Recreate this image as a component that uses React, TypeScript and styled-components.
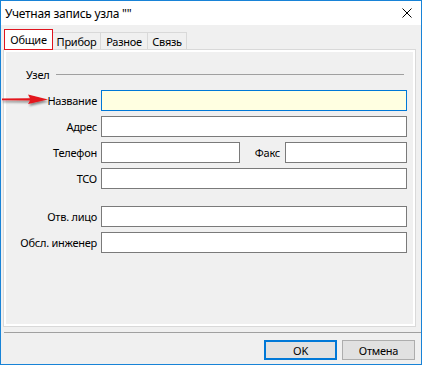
import React from "react";
import styled, { createGlobalStyle } from "styled-components";

const GlobalStyle = createGlobalStyle`
  html, body { margin: 0; padding: 0; background: #ffffff; }
  body {
    font-family: "Noto Sans", "Segoe UI", sans-serif;
    font-size: 11px;
    letter-spacing: -0.25px;
    color: #000000;
  }
  * { box-sizing: border-box; }
`;

const Window = styled.div`
  position: relative;
  width: 422px;
  height: 365px;
  border: 1px solid #1883d7;
  background: #f0f0f0;
  display: flex;
  flex-direction: column;
`;

const TitleBar = styled.div`
  height: 24px;
  flex: none;
  background: #ffffff;
  display: flex;
  align-items: center;
  justify-content: space-between;
  padding: 0 9px 0 4px;
`;

const Title = styled.span`
  font-size: 12px;
  letter-spacing: -0.25px;
  line-height: 15px;
  white-space: pre;
`;

const CloseIcon = styled.svg`
  width: 10px;
  height: 10px;
  display: block;
`;

const Body = styled.div`
  flex: 1;
  display: flex;
  flex-direction: column;
  padding: 4px 0 4px 2px;
`;

const TabStrip = styled.div`
  display: flex;
  align-items: flex-end;
  height: 20px;
  padding-left: 1px;
`;

const Tab = styled.div<{ $active?: boolean; $w: number }>`
  position: relative;
  z-index: ${(p) => (p.$active ? 2 : 1)};
  width: ${(p) => p.$w}px;
  height: ${(p) => (p.$active ? 21 : 17)}px;
  margin-bottom: ${(p) => (p.$active ? -1 : 0)}px;
  padding-top: ${(p) => (p.$active ? 0 : 1)}px;
  background: ${(p) => (p.$active ? "#ffffff" : "#f0f0f0")};
  border-top: 1px solid ${(p) => (p.$active ? "#e0141e" : "#d9d9d9")};
  border-right: 1px solid ${(p) => (p.$active ? "#e0141e" : "#d9d9d9")};
  border-left: ${(p) => (p.$active ? "1px solid #e0141e" : "none")};
  border-bottom: ${(p) => (p.$active ? "1px solid #e0141e" : "none")};
  display: flex;
  align-items: center;
  justify-content: center;
  line-height: 15px;
  white-space: nowrap;
`;

const Panel = styled.div`
  width: 413px;
  height: 278px;
  flex: none;
  border: 1px solid #d9d9d9;
  box-shadow: inset 0 0 0 2px #ffffff;
  background: #f0f0f0;
  display: flex;
  flex-direction: column;
  padding-top: 17px;
`;

const GroupHeader = styled.div`
  display: flex;
  align-items: center;
  padding: 0 11px 0 22px;
  height: 15px;
`;

const GroupLabel = styled.span`
  line-height: 15px;
`;

const GroupLine = styled.div`
  flex: 1;
  height: 1px;
  margin-left: 7px;
  margin-top: -1px;
  background: #a0a0a0;
`;

const Form = styled.div`
  display: grid;
  grid-template-columns: 93px 306px;
  column-gap: 4px;
  row-gap: 5px;
  margin-top: 8px;
`;

const Label = styled.label<{ $gapBefore?: number }>`
  text-align: right;
  align-self: center;
  line-height: 15px;
  white-space: nowrap;
  margin-top: ${(p) => p.$gapBefore ?? 0}px;
`;

const Field = styled.div<{ $focused?: boolean; $w?: number; $gapBefore?: number }>`
  height: 21px;
  width: ${(p) => (p.$w ? `${p.$w}px` : "100%")};
  border: 1px solid ${(p) => (p.$focused ? "#0078d7" : "#7a7a7a")};
  background: ${(p) => (p.$focused ? "#ffffe1" : "#ffffff")};
  margin-top: ${(p) => p.$gapBefore ?? 0}px;
  flex: none;
`;

const SplitRow = styled.div`
  display: flex;
  align-items: center;
`;

const InlineLabel = styled.label`
  width: 40px;
  margin-right: 5px;
  text-align: right;
  line-height: 15px;
`;

const Separator = styled.div`
  height: 1px;
  background: #a0a0a0;
  margin: 5px 0 0 1px;
  flex: none;
`;

const ButtonRow = styled.div`
  display: flex;
  justify-content: flex-end;
  gap: 5px;
  margin-top: 7px;
  padding-right: 6px;
`;

const Button = styled.button<{ $primary?: boolean }>`
  width: 73px;
  height: 20px;
  padding: 0;
  font-family: inherit;
  font-size: 11px;
  letter-spacing: -0.25px;
  color: #000000;
  background: #e1e1e1;
  border: ${(p) => (p.$primary ? "2px solid #0078d7" : "1px solid #adadad")};
  display: flex;
  align-items: center;
  justify-content: center;
`;

const ArrowOverlay = styled.svg`
  position: absolute;
  left: 0;
  top: 87px;
  width: 50px;
  height: 24px;
  pointer-events: none;
`;

export default function App() {
  return (
    <>
      <GlobalStyle />
      <Window>
        <TitleBar>
          <Title>Учетная запись узла ""</Title>
          <CloseIcon viewBox="0 0 10 10">
            <path d="M0.5 0.5 L9.5 9.5 M9.5 0.5 L0.5 9.5" stroke="#000" strokeWidth="1" fill="none" />
          </CloseIcon>
        </TitleBar>
        <Body>
          <TabStrip>
            <Tab $active $w={49}>Общие</Tab>
            <Tab $w={48}>Прибор</Tab>
            <Tab $w={47}>Разное</Tab>
            <Tab $w={39}>Связь</Tab>
          </TabStrip>
          <Panel>
            <GroupHeader>
              <GroupLabel>Узел</GroupLabel>
              <GroupLine />
            </GroupHeader>
            <Form>
              <Label>Название</Label>
              <Field $focused />
              <Label>Адрес</Label>
              <Field />
              <Label>Телефон</Label>
              <SplitRow>
                <Field $w={139} />
                <InlineLabel>Факс</InlineLabel>
                <Field $w={122} />
              </SplitRow>
              <Label>ТСО</Label>
              <Field />
              <Label $gapBefore={12}>Отв. лицо</Label>
              <Field $gapBefore={12} />
              <Label>Обсл. инженер</Label>
              <Field />
            </Form>
          </Panel>
          <Separator />
          <ButtonRow>
            <Button $primary>OK</Button>
            <Button>Отмена</Button>
          </ButtonRow>
        </Body>
        <ArrowOverlay viewBox="1 88 50 24">
          <defs>
            <filter id="arrowShadow" x="-20%" y="-50%" width="140%" height="200%">
              <feDropShadow dx="1" dy="2" stdDeviation="1" floodColor="#000" floodOpacity="0.45" />
            </filter>
          </defs>
          <path
            d="M2 98.6 L30 98.2 L28 94.5 L48 99.5 L28 104 L30 100.6 L2 100.2 Z"
            fill="#e3141b"
            filter="url(#arrowShadow)"
          />
        </ArrowOverlay>
      </Window>
    </>
  );
}
